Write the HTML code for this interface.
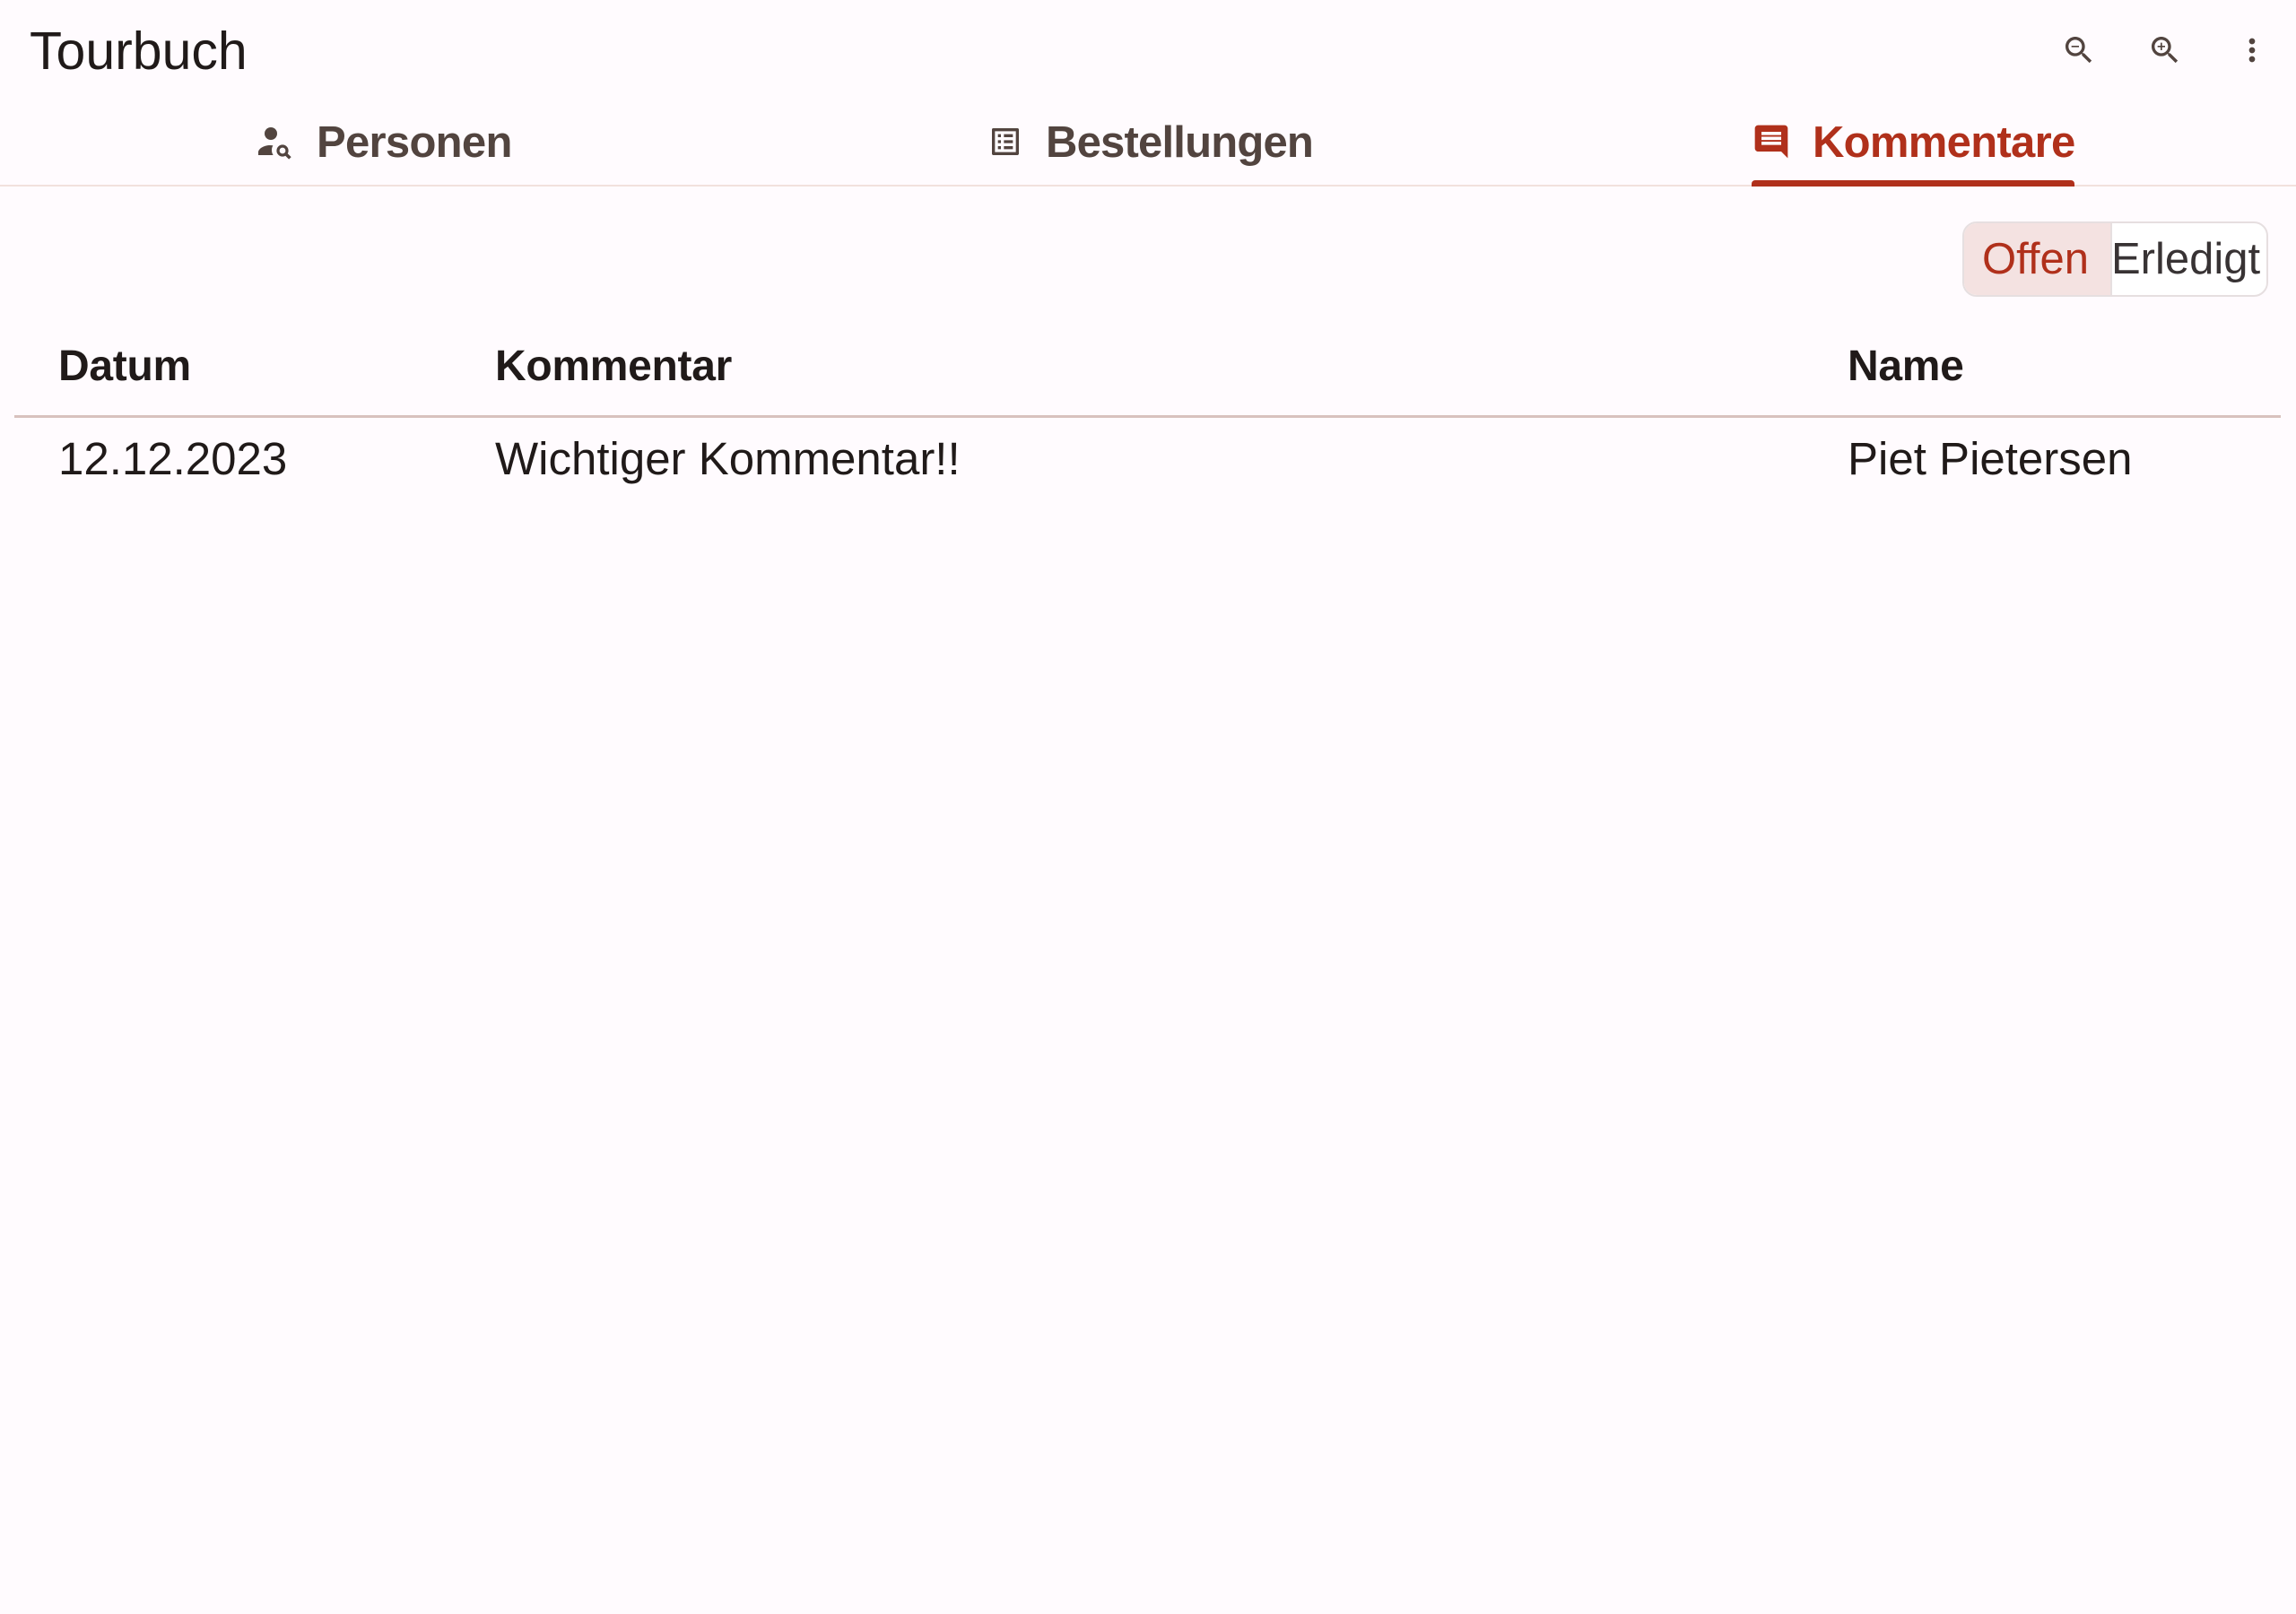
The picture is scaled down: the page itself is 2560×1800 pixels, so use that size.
<!DOCTYPE html>
<html><head><meta charset="utf-8"><style>
html,body{margin:0;padding:0;width:2560px;height:1800px;background:#fffbfe;overflow:hidden;font-family:"Liberation Sans",sans-serif;color:#201a19}
.abs{position:absolute;white-space:nowrap}
svg{position:absolute}
</style></head><body>
<div class="abs" style="left:33px;top:22px;font-size:59px;line-height:70px;color:#201a19">Tourbuch</div>

<svg style="left:2298px;top:36px" width="40" height="40" viewBox="0 0 24 24"><path fill="#52443f" d="M15.5 14h-.79l-.28-.27C15.41 12.59 16 11.11 16 9.5 16 5.91 13.09 3 9.5 3S3 5.910 3 9.5 5.91 16 9.5 16c1.61 0 3.09-.59 4.23-1.57l.27.28v.79l5 4.99L20.49 19l-4.99-5zm-6 0C7.01 14 5 11.99 5 9.5S7.01 5 9.5 5 14 7.01 14 9.5 11.99 14 9.5 14zM7 9h5v1H7z"/></svg>
<svg style="left:2394px;top:36px" width="40" height="40" viewBox="0 0 24 24"><path fill="#52443f" d="M15.5 14h-.79l-.28-.27C15.41 12.59 16 11.11 16 9.5 16 5.91 13.09 3 9.5 3S3 5.91 3 9.5 5.91 16 9.5 16c1.61 0 3.09-.59 4.23-1.57l.27.28v.79l5 4.99L20.49 19l-4.99-5zm-6 0C7.01 14 5 11.99 5 9.5S7.01 5 9.5 5 14 7.01 14 9.5 11.99 14 9.5 14zM12 10h-2v2H9v-2H7V9h2V7h1v2h2v1z"/></svg>
<svg style="left:2491px;top:36px" width="40" height="40" viewBox="0 0 24 24"><path fill="#52443f" d="M12 8c1.1 0 2-.9 2-2s-.9-2-2-2-2 .9-2 2 .9 2 2 2zm0 2c-1.1 0-2 .9-2 2s.9 2 2 2 2-.9 2-2-.9-2-2-2zm0 6c-1.1 0-2 .9-2 2s.9 2 2 2 2-.9 2-2-.9-2-2-2z"/></svg>

<svg style="left:282px;top:135px" width="48" height="48" viewBox="0 0 24 24"><circle cx="10" cy="7" r="3.5" fill="#52443f"/><path fill="#52443f" d="M3 19v-1.5c0-2.2 3.3-4 6.5-4 .6 0 1.2.05 1.7.15-.5.8-.7 1.6-.7 2.6 0 1 .3 2 .8 2.75z"/><circle cx="16.5" cy="16.5" r="2.5" fill="none" stroke="#52443f" stroke-width="1.6"/><path d="M18.3 18.3l2.4 2.4" stroke="#52443f" stroke-width="1.8"/></svg>
<div class="abs" style="left:353px;top:130px;font-size:49px;line-height:58px;font-weight:bold;color:#52443f;letter-spacing:-0.7px">Personen</div>

<svg style="left:1101px;top:138px" width="40" height="40" viewBox="0 0 24 24"><path fill="#52443f" d="M19 5v14H5V5h14m1.1-2H3.9c-.5 0-.9.4-.9.9v16.2c0 .4.4.9.9.9h16.2c.4 0 .9-.5.9-.9V3.9c0-.5-.5-.9-.9-.9zM11 7h6v2h-6V7zm0 4h6v2h-6v-2zm0 4h6v2h-6zM7 7h2v2H7zm0 4h2v2H7zm0 4h2v2H7z"/></svg>
<div class="abs" style="left:1166px;top:130px;font-size:49px;line-height:58px;font-weight:bold;color:#52443f;letter-spacing:-0.8px">Bestellungen</div>

<svg style="left:1953px;top:136px" width="44" height="44" viewBox="0 0 24 24"><path fill="#b0301b" d="M21.99 4c0-1.1-.89-2-1.99-2H4c-1.1 0-2 .9-2 2v12c0 1.1.9 2 2 2h14l4 4-.01-18zM18 14H6v-2h12v2zm0-3H6V9h12v2zm0-3H6V6h12v2z"/></svg>
<div class="abs" style="left:2021px;top:130px;font-size:49px;line-height:58px;font-weight:bold;color:#b0301b;letter-spacing:-0.7px">Kommentare</div>

<div class="abs" style="left:0;top:206px;width:2560px;height:2px;background:#f2e1dd"></div>
<div class="abs" style="left:1953px;top:201px;width:360px;height:7px;background:#b0301b;border-radius:4px 4px 0 0"></div>

<div class="abs" style="left:2188px;top:247px;width:337px;height:80px;border:2px solid #e6dfe0;border-radius:16px;overflow:hidden;background:#fff">
  <div style="position:absolute;left:0;top:0;width:163px;height:80px;background:#f4e2e1;border-right:2px solid #e6dfe0"></div>
  <div style="position:absolute;left:20px;top:11px;font-size:49px;line-height:58px;color:#b0301b">Offen</div>
  <div style="position:absolute;left:164px;top:11px;font-size:49px;line-height:58px;color:#383334">Erledigt</div>
</div>

<div class="abs" style="left:65px;top:380px;font-size:48px;line-height:58px;font-weight:bold;letter-spacing:-0.3px">Datum</div>
<div class="abs" style="left:552px;top:380px;font-size:48px;line-height:58px;font-weight:bold;letter-spacing:-0.3px">Kommentar</div>
<div class="abs" style="left:2060px;top:380px;font-size:48px;line-height:58px;font-weight:bold;letter-spacing:-0.3px">Name</div>
<div class="abs" style="left:16px;top:463px;width:2527px;height:3px;background:#d8c2be"></div>
<div class="abs" style="left:65px;top:483px;font-size:51px;line-height:58px">12.12.2023</div>
<div class="abs" style="left:552px;top:483px;font-size:51px;line-height:58px">Wichtiger Kommentar!!</div>
<div class="abs" style="left:2060px;top:483px;font-size:51px;line-height:58px">Piet Pietersen</div>
</body></html>
